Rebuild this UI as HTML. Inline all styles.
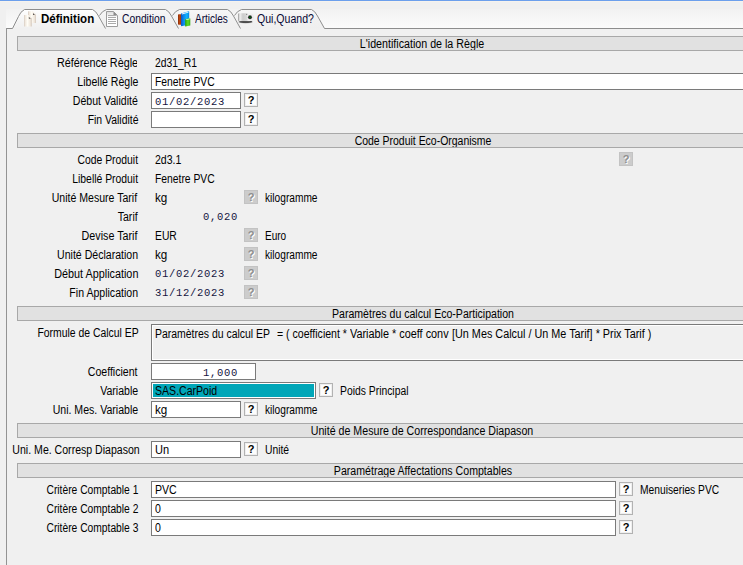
<!DOCTYPE html>
<html lang="fr"><head><meta charset="utf-8"><title>Définition</title>
<style>

html,body{margin:0;padding:0}
body{width:743px;height:565px;overflow:hidden;background:#f0f0f0;position:relative;font-family:"Liberation Sans", sans-serif;font-size:11px;color:#000}
.t{position:absolute;white-space:pre;line-height:13px;font-size:12px;height:13px}
.m{position:absolute;white-space:pre;line-height:11px;font-size:10.5px;height:11px;letter-spacing:0.7px;font-family:"Liberation Mono", monospace;color:#14143e}
.b{font-weight:bold}
.hd{position:absolute;left:17px;width:728px;height:13px;border:1px solid #a8a8a8;background:#e1e1e1;box-sizing:content-box}
.in{position:absolute;border:1px solid #7a7a7a;background:#fff}
.fb{position:absolute;border:1px solid #7a7a7a;background:#f0f0f0;box-shadow:inset 0 0 0 1px #fff}
.qb{position:absolute;width:12px;height:12px;border:1px solid #b2b2b2;background:#fdfdfd;box-shadow:inset 0 0 0 1px #efefef}
.qb span{position:absolute;left:0;width:12px;top:0px;text-align:center;font-weight:bold;font-size:11px;line-height:13px}
.qd{position:absolute;width:12px;height:12px;border:1px solid #c3c3c3;background:#cccccc}
.qd span{position:absolute;left:0;top:0;width:12px;text-align:center;font-weight:bold;font-size:11px;line-height:13px;color:#8e8e8e;text-shadow:1px 1px 0 #fff}

</style></head><body>
<div style="position:absolute;left:0;top:0;width:743px;height:1px;background:#6c9fec"></div>
<div style="position:absolute;left:0;top:1px;width:743px;height:1px;background:#f6f3ee"></div>
<svg style="position:absolute;left:0;top:0" width="743" height="40" viewBox="0 0 743 40">
<defs>
<linearGradient id="pg" x1="0" x2="1" y1="0" y2="0"><stop offset="0" stop-color="#d6cbc0"/><stop offset=".18" stop-color="#f1e9df"/><stop offset=".45" stop-color="#fffdf6"/><stop offset=".8" stop-color="#efe6db"/><stop offset="1" stop-color="#d2c6ba"/></linearGradient>
<linearGradient id="bl" x1="0" x2="1" y1="0" y2="0"><stop offset="0" stop-color="#0a58c8"/><stop offset=".3" stop-color="#0c86ea"/><stop offset=".7" stop-color="#10b4ff"/><stop offset="1" stop-color="#0a84e0"/></linearGradient>
<linearGradient id="rd" x1="0" x2="1" y1="0" y2="0"><stop offset="0" stop-color="#8a2a06"/><stop offset=".5" stop-color="#c04a10"/><stop offset="1" stop-color="#8e2e08"/></linearGradient>
<linearGradient id="gr" x1="0" x2="1" y1="0" y2="0"><stop offset="0" stop-color="#2e9c10"/><stop offset=".55" stop-color="#5ce024"/><stop offset="1" stop-color="#36ac14"/></linearGradient>
<linearGradient id="cm" x1="0" x2="1" y1="0" y2="0"><stop offset="0" stop-color="#b6b6b6"/><stop offset=".13" stop-color="#eeeeee"/><stop offset=".3" stop-color="#cccccc"/><stop offset=".52" stop-color="#d6d6d6"/><stop offset=".68" stop-color="#f4f4f4"/><stop offset="1" stop-color="#e6e6e6"/></linearGradient>
<linearGradient id="dc" x1="0" x2="0" y1="0" y2="1"><stop offset="0" stop-color="#dcdcdc"/><stop offset=".3" stop-color="#f4f4f4"/><stop offset=".4" stop-color="#ffffff"/></linearGradient>
<linearGradient id="tl" x1="0" x2="0" y1="0" y2="1"><stop offset="0" stop-color="#f2f2f2"/><stop offset="1" stop-color="#fbfbfb"/></linearGradient>
<linearGradient id="ta" x1="0" x2="0" y1="0" y2="1"><stop offset="0" stop-color="#ffffff"/><stop offset=".5" stop-color="#f6f6f6"/><stop offset="1" stop-color="#f0f0f0"/></linearGradient>
<linearGradient id="ti" x1="0" x2="0" y1="0" y2="1"><stop offset="0" stop-color="#f7f7f7"/><stop offset=".5" stop-color="#f1f1f1"/><stop offset="1" stop-color="#efefef"/></linearGradient>
</defs>
<!-- light area left of first tab -->
<rect x="6" y="9" width="740" height="19" fill="url(#tl)"/>
<!-- tab fills -->
<path d="M234.5 15.5Q237 11 241.5 9.5H311.5Q315 11 317.5 16L324.5 28.5H241Z" fill="url(#ti)"/>
<path d="M172.5 15.5Q175 11 179.5 9.5H227.5Q231 11 233.5 16L240.5 28.5H179Z" fill="url(#ti)"/>
<path d="M99.5 15.5Q102 11 106.5 9.5H165.5Q169 11 171.5 16L178.5 28.5H106Z" fill="url(#ti)"/>
<path d="M12.5 28.5L18.5 16.5Q20.5 11.5 24.5 9.5H92.5Q96 11 98.5 16L105.5 28.5Z" fill="url(#ta)"/>
<!-- tab outlines -->
<g fill="none" stroke="#8d8d8d" stroke-width="1">
<path d="M6.5 40V28.5H12.5L18.5 16.5Q20.5 11.5 24.5 9.5H92.5Q96 11 98.5 16L105.5 28.5"/>
<path d="M99.5 15.5Q102 11 106.5 9.5H165.5Q169 11 171.5 16L178.5 28.5"/>
<path d="M172.5 15.5Q175 11 179.5 9.5H227.5Q231 11 233.5 16L240.5 28.5"/>
<path d="M234.5 15.5Q237 11 241.5 9.5H311.5Q315 11 317.5 16L324.5 28.5H745"/>
</g>
<!-- icon 1: two beige pages -->
<g>
<path d="M28 11.2H32.8L36 14.4V23.1H28Z" fill="url(#pg)"/>
<path d="M32.6 11.6L35.6 14.6H33.4Q32.6 14.5 32.6 13.8Z" fill="#fbf7f0"/>
<path d="M33 13L35 15H33.6Q33 14.9 33 14.4Z" fill="#5a5450"/>
<path d="M24 15H28.6L31.8 18.2V26.4H24Z" fill="url(#pg)"/>
<path d="M28.4 15.4L31.4 18.4H29.2Q28.4 18.3 28.4 17.6Z" fill="#fbf7f0"/>
<path d="M28.8 16.8L30.8 18.8H29.4Q28.8 18.7 28.8 18.2Z" fill="#55504c"/>
</g>
<!-- icon 2: text page -->
<g>
<path d="M106.5 11.5H113.5L117.5 15.5V26.5H106.5Z" fill="url(#dc)" stroke="#9c9c9c"/>
<path d="M113.5 11.8V15.5H117.2Z" fill="#8a8a8a"/>
<path d="M108 15.5H116M108 17.5H116M108 19.5H116M108 21.5H116M108 23.5H116" stroke="#aaaaaa" stroke-width="1"/>
</g>
<!-- icon 3: books -->
<g>
<rect x="178" y="14.2" width="3.4" height="10.6" rx=".8" fill="url(#rd)"/>
<path d="M181 13.6L188.6 11.3Q189.2 11.2 189.2 11.9V24.6L181.4 26.2Q181 26.2 181 25.6Z" fill="url(#bl)"/>
<path d="M181.8 13.6L188.4 11.7L188.6 12.5L182 14.4Z" fill="#eef6ff"/>
<path d="M185.1 19.3L189.8 18.2Q190.3 18.2 190.3 18.8V25.4L185.5 26.5Q185.1 26.5 185.1 26Z" fill="url(#gr)"/>
<path d="M185.8 19.4L189.6 18.6L189.7 19.2L185.9 20.1Z" fill="#f0fff0"/>
</g>
<!-- icon 4: camera -->
<g>
<ellipse cx="245.6" cy="22" rx="7.4" ry="1.5" fill="#707070" opacity=".4"/>
<ellipse cx="245.6" cy="21.7" rx="6.6" ry="1" fill="#262626"/>
<path d="M238.8 13.3H249.6Q253.9 13.5 253.9 17.3Q253.9 21.1 249.6 21.3H238.8Q238.1 21.3 238.1 20.6V14Q238.1 13.3 238.8 13.3Z" fill="url(#cm)"/>
<path d="M238.5 13.8V20.8" stroke="#a4a4a4" stroke-width=".8"/>
<circle cx="250" cy="17.3" r="2.8" fill="#f6f6f6"/>
<circle cx="250" cy="17.3" r="2.3" fill="#a6a6a6"/>
<circle cx="250" cy="17.3" r="1.7" fill="#161616"/>
<circle cx="250" cy="17.2" r=".9" fill="#006c10"/>
<rect x="246" y="13.9" width="1.2" height="1" fill="#8c8c8c"/>
</g>
</svg>

<span id="t1" class="t b" style="top:13px;left:41px;transform-origin:0 0;transform:scaleX(0.962);">Définition</span>
<span id="t2" class="t" style="top:13px;left:122px;transform-origin:0 0;transform:scaleX(0.8577);color:#080834;">Condition</span>
<span id="t3" class="t" style="top:13px;left:195px;transform-origin:0 0;transform:scaleX(0.835);color:#080834;">Articles</span>
<span id="t4" class="t" style="top:13px;left:256.54px;transform-origin:0 0;transform:scaleX(0.88);color:#080834;">Qui,Quand?</span>
<div style="position:absolute;left:6px;top:28px;width:1px;height:540px;background:#939393"></div>
<div class="hd" style="top:36px"></div>
<div style="position:absolute;left:0;top:37px;width:743px;height:13px;overflow:hidden"><div style="position:absolute;left:0;top:-37px;width:743px;height:565px"><span id="t5" class="t" style="top:38px;left:222.08px;width:400px;text-align:center;transform-origin:50% 0;transform:scaleX(0.8904);">L&#x27;identification de la Règle</span></div></div>
<div style="position:absolute;left:0;top:55px;width:137px;height:16px;overflow:hidden"><div style="position:absolute;left:0;top:-55px;width:743px;height:565px"><span id="t6" class="t" style="top:57px;right:605.0px;transform-origin:100% 0;transform:scaleX(0.9);">Référence Règle</span></div></div>
<span id="t7" class="t" style="top:57px;left:155px;transform-origin:0 0;transform:scaleX(0.8636);">2d31_R1</span>
<span id="t8" class="t" style="top:76px;right:605px;transform-origin:100% 0;transform:scaleX(0.88);">Libellé Règle</span>
<div class="in" style="left:151px;top:73px;width:598px;height:15px"></div>
<span id="t9" class="t" style="top:76px;left:155px;transform-origin:0 0;transform:scaleX(0.8604);">Fenetre PVC</span>
<span id="t10" class="t" style="top:95px;right:605px;transform-origin:100% 0;transform:scaleX(0.88);">Début Validité</span>
<div class="in" style="left:151px;top:92px;width:88px;height:15px"></div>
<span id="t11" class="m" style="top:97px;left:155px;transform-origin:0 0;">01/02/2023</span>
<div class="qb" style="left:244px;top:93px"><span>?</span></div>
<span id="t12" class="t" style="top:114px;right:605px;transform-origin:100% 0;transform:scaleX(0.869);">Fin Validité</span>
<div class="in" style="left:151px;top:111px;width:88px;height:15px"></div>
<div class="qb" style="left:244px;top:112px"><span>?</span></div>
<div class="hd" style="top:133px"></div>
<div style="position:absolute;left:0;top:134px;width:743px;height:13px;overflow:hidden"><div style="position:absolute;left:0;top:-134px;width:743px;height:565px"><span id="t13" class="t" style="top:135px;left:222.5px;width:400px;text-align:center;transform-origin:50% 0;transform:scaleX(0.8723);">Code Produit Eco-Organisme</span></div></div>
<span id="t14" class="t" style="top:154px;right:605px;transform-origin:100% 0;transform:scaleX(0.8639);">Code Produit</span>
<span id="t15" class="t" style="top:154px;left:155px;transform-origin:0 0;transform:scaleX(0.88);">2d3.1</span>
<div class="qd" style="left:619px;top:152px"><span>?</span></div>
<span id="t16" class="t" style="top:173px;right:605px;transform-origin:100% 0;transform:scaleX(0.8651);">Libellé Produit</span>
<span id="t17" class="t" style="top:173px;left:155px;transform-origin:0 0;transform:scaleX(0.8604);">Fenetre PVC</span>
<span id="t18" class="t" style="top:192px;right:605.72px;transform-origin:100% 0;transform:scaleX(0.88);">Unité Mesure Tarif</span>
<span id="t19" class="t" style="top:192px;left:155px;transform-origin:0 0;transform:scaleX(0.9719);">kg</span>
<div class="qd" style="left:244px;top:190px"><span>?</span></div>
<span id="t20" class="t" style="top:192px;left:265px;transform-origin:0 0;transform:scaleX(0.8467);">kilogramme</span>
<span id="t21" class="t" style="top:211px;right:605px;transform-origin:100% 0;transform:scaleX(0.88);">Tarif</span>
<span id="t22" class="t" style="top:230px;right:605.72px;transform-origin:100% 0;transform:scaleX(0.8941);">Devise Tarif</span>
<span id="t23" class="t" style="top:230px;left:155px;transform-origin:0 0;transform:scaleX(0.8608);">EUR</span>
<div class="qd" style="left:244px;top:228px"><span>?</span></div>
<span id="t24" class="t" style="top:230px;left:265px;transform-origin:0 0;transform:scaleX(0.8358);">Euro</span>
<span id="t25" class="t" style="top:249px;right:605px;transform-origin:100% 0;transform:scaleX(0.88);">Unité Déclaration</span>
<span id="t26" class="t" style="top:249px;left:155px;transform-origin:0 0;transform:scaleX(0.9719);">kg</span>
<div class="qd" style="left:244px;top:247px"><span>?</span></div>
<span id="t27" class="t" style="top:249px;left:265px;transform-origin:0 0;transform:scaleX(0.8467);">kilogramme</span>
<span id="t28" class="t" style="top:268px;right:605px;transform-origin:100% 0;transform:scaleX(0.9009);">Début Application</span>
<span id="t29" class="m" style="top:269px;left:155px;transform-origin:0 0;">01/02/2023</span>
<div class="qd" style="left:244px;top:266px"><span>?</span></div>
<span id="t30" class="t" style="top:287px;right:605px;transform-origin:100% 0;transform:scaleX(0.88);">Fin Application</span>
<span id="t31" class="m" style="top:288px;left:155px;transform-origin:0 0;">31/12/2023</span>
<div class="qd" style="left:244px;top:285px"><span>?</span></div>
<span id="t32" class="m" style="top:212px;right:505px;transform-origin:100% 0;">0,020</span>
<div class="hd" style="top:306px"></div>
<div style="position:absolute;left:0;top:307px;width:743px;height:13px;overflow:hidden"><div style="position:absolute;left:0;top:-307px;width:743px;height:565px"><span id="t33" class="t" style="top:308px;left:222.5px;width:400px;text-align:center;transform-origin:50% 0;transform:scaleX(0.88);">Paramètres du calcul Eco-Participation</span></div></div>
<span id="t34" class="t" style="top:327px;right:604.58px;transform-origin:100% 0;transform:scaleX(0.868);">Formule de Calcul EP</span>
<div class="fb" style="left:151px;top:324px;width:598px;height:35px"></div>
<div class="ft">
<span id="t35" class="t" style="top:328px;left:155px;transform-origin:0 0;transform:scaleX(0.8709);">Paramètres du calcul EP</span>
  
<span id="t36" class="t" style="top:328px;left:277px;transform-origin:0 0;transform:scaleX(0.88);">= ( coefficient *</span>
 
<span id="t37" class="t" style="top:328px;left:349.84px;transform-origin:0 0;transform:scaleX(0.9049);">Variable * coeff conv</span>
 
<span id="t38" class="t" style="top:328px;left:452px;transform-origin:0 0;transform:scaleX(0.9025);">[Un Mes Calcul / Un Me Tarif] * Prix Tarif )</span>
</div>
<span id="t39" class="t" style="top:366px;right:605.6px;transform-origin:100% 0;transform:scaleX(0.88);">Coefficient</span>
<div class="in" style="left:151px;top:363px;width:103px;height:15px"></div>
<span id="t40" class="m" style="top:368px;right:505px;transform-origin:100% 0;">1,000</span>
<span id="t41" class="t" style="top:385px;right:605px;transform-origin:100% 0;transform:scaleX(0.88);">Variable</span>
<div class="in" style="left:151px;top:382px;width:163px;height:15px"></div>
<div style="position:absolute;left:153px;top:384px;width:161px;height:13px;background:#00a6b8"></div>
<span id="t42" class="t" style="top:385px;left:155px;transform-origin:0 0;transform:scaleX(0.88);">SAS.CarPoid</span>
<div class="qb" style="left:319px;top:383px"><span>?</span></div>
<span id="t43" class="t" style="top:385px;left:340px;transform-origin:0 0;transform:scaleX(0.8629);">Poids Principal</span>
<span id="t44" class="t" style="top:404px;right:605px;transform-origin:100% 0;transform:scaleX(0.88);">Uni. Mes. Variable</span>
<div class="in" style="left:151px;top:401px;width:88px;height:15px"></div>
<span id="t45" class="t" style="top:404px;left:155px;transform-origin:0 0;transform:scaleX(0.9719);">kg</span>
<div class="qb" style="left:244px;top:402px"><span>?</span></div>
<span id="t46" class="t" style="top:404px;left:265px;transform-origin:0 0;transform:scaleX(0.8467);">kilogramme</span>
<div class="hd" style="top:423px"></div>
<div style="position:absolute;left:0;top:424px;width:743px;height:13px;overflow:hidden"><div style="position:absolute;left:0;top:-424px;width:743px;height:565px"><span id="t47" class="t" style="top:425px;left:222.08px;width:400px;text-align:center;transform-origin:50% 0;transform:scaleX(0.887);">Unité de Mesure de Correspondance Diapason</span></div></div>
<span id="t48" class="t" style="top:444px;right:603.2px;transform-origin:100% 0;transform:scaleX(0.88);">Uni. Me. Corresp Diapason</span>
<div class="in" style="left:151px;top:441px;width:88px;height:15px"></div>
<span id="t49" class="t" style="top:444px;left:155px;transform-origin:0 0;transform:scaleX(0.9179);">Un</span>
<div class="qb" style="left:244px;top:442px"><span>?</span></div>
<span id="t50" class="t" style="top:444px;left:265px;transform-origin:0 0;transform:scaleX(0.8603);">Unité</span>
<div class="hd" style="top:463px"></div>
<div style="position:absolute;left:0;top:464px;width:743px;height:13px;overflow:hidden"><div style="position:absolute;left:0;top:-464px;width:743px;height:565px"><span id="t51" class="t" style="top:465px;left:222.56px;width:400px;text-align:center;transform-origin:50% 0;transform:scaleX(0.8832);">Paramétrage Affectations Comptables</span></div></div>
<span id="t52" class="t" style="top:484px;right:605px;transform-origin:100% 0;transform:scaleX(0.856);">Critère Comptable 1</span>
<div class="in" style="left:151px;top:481px;width:463px;height:15px"></div>
<span id="t53" class="t" style="top:484px;left:155px;transform-origin:0 0;transform:scaleX(0.88);">PVC</span>
<div class="qb" style="left:619px;top:482px"><span>?</span></div>
<span id="t54" class="t" style="top:503px;right:605px;transform-origin:100% 0;transform:scaleX(0.856);">Critère Comptable 2</span>
<div class="in" style="left:151px;top:500px;width:463px;height:15px"></div>
<span id="t55" class="t" style="top:503px;left:155px;transform-origin:0 0;transform:scaleX(0.88);">0</span>
<div class="qb" style="left:619px;top:501px"><span>?</span></div>
<span id="t56" class="t" style="top:522px;right:605px;transform-origin:100% 0;transform:scaleX(0.856);">Critère Comptable 3</span>
<div class="in" style="left:151px;top:519px;width:463px;height:15px"></div>
<span id="t57" class="t" style="top:522px;left:155px;transform-origin:0 0;transform:scaleX(0.88);">0</span>
<div class="qb" style="left:619px;top:520px"><span>?</span></div>
<span id="t58" class="t" style="top:484px;left:640px;transform-origin:0 0;transform:scaleX(0.854);">Menuiseries PVC</span>
</body></html>
